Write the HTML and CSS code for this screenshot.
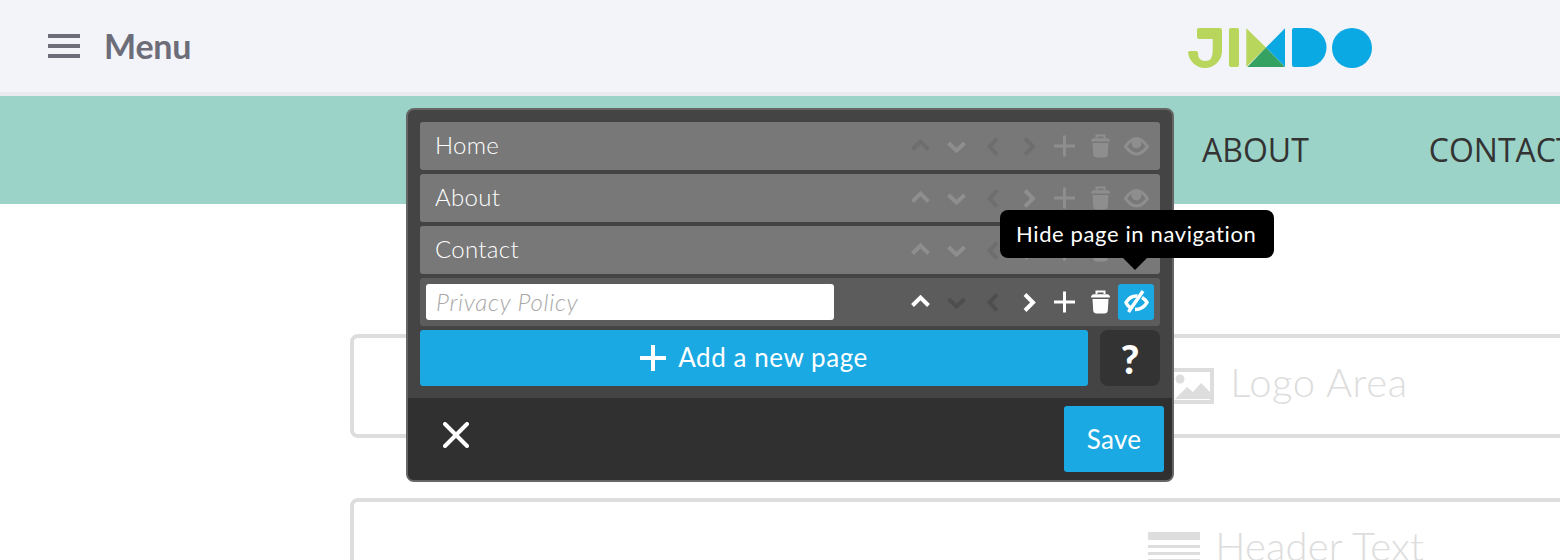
FILE: index.html
```html
<!DOCTYPE html>
<html lang="en">
<head>
<meta charset="utf-8">
<title>Jimdo navigation editor</title>
<link rel="stylesheet" href="styles.css">
</head>
<body>
<svg class="defs" width="0" height="0" aria-hidden="true">
  <symbol id="up" viewBox="0 0 36 36"><path d="M10.5 21.5l8-8 8 8" class="st"/></symbol>
  <symbol id="down" viewBox="0 0 36 36"><path d="M10.5 15l8 7.5 8-7.5" class="st"/></symbol>
  <symbol id="left" viewBox="0 0 36 36"><path d="M23 10.5l-7.5 8 7.5 8" class="st"/></symbol>
  <symbol id="right" viewBox="0 0 36 36"><path d="M15 10.5l8 8-8 8" class="st"/></symbol>
  <symbol id="plus" viewBox="0 0 36 36"><path d="M8 18h21M18.5 7.5v21" class="st thin"/></symbol>
  <symbol id="trash" viewBox="0 0 36 36"><path d="M14.5 10V7.5h8V10" class="hd"/><path d="M9 13.5q0-3 3-3.300h13q3 .3 3 3.300z" class="fl"/><path d="M10.500 15h16l-.7 11.500q-.3 3-3.300 3h-8q-3 0-3.300-3z" class="fl"/></symbol>
  <symbol id="eye" viewBox="0 0 36 36"><path d="M7.500 18.500Q13 10.500 18.500 10.500T29.500 18.500Q24 26 18.500 26T7.500 18.500z" class="hd wide"/><circle cx="18.500" cy="15.500" r="5" class="fl"/></symbol>
  <symbol id="eye-off" viewBox="0 0 36 36"><path d="M12.500 24Q9 21.500 8 18.500 12 11.500 19.500 12" class="st mid"/><path d="M24 13.500Q27.500 15.500 29 18.500 25 25.500 17 25.500" class="st mid"/><path d="M25 7L10.500 28" class="st mid"/></symbol>
</svg>

<div class="page">
  <header class="topbar">
    <div class="menu">
      <span class="burger"><i></i><i></i><i></i></span>
      <span class="menu-label">Menu</span>
    </div>
    <svg class="logo" viewBox="0 0 184 40" width="184" height="40" role="img" aria-label="Jimdo">
      <path class="lime" d="M9 2Q9 0 11 0H32Q34 0 34 2V23A17 17 0 0 1 0 23Q0 23 0 25 0 23 2 23H8Q10 23 10 25 10 33 17.300 33 24.700 33 24.700 23V11H11Q9 11 9 9Z"/>
      <rect class="lime" x="41" y="0" width="10" height="39" rx="2"/>
      <path class="lime" d="M58.300 0.300L78 19.500 58.300 38.700Z"/>
      <path class="green" d="M59.300 39L78 19.500 97 39Z"/>
      <path class="blue" d="M97 0.300L78 19.500 97 38.700Z"/>
      <path class="blue" d="M104 2Q104 0 106 0H119A19.500 19.500 0 0 1 119 39H106Q104 39 104 37Z"/>
      <circle class="blue" cx="164" cy="20" r="20"/>
    </svg>
    <span></span>
  </header>

  <nav class="sitenav">
    <a>HOME</a>
    <a>ABOUT</a>
    <a>CONTACT</a>
  </nav>

  <main class="slots">
    <section class="slot slot-logo">
      <svg class="ph-icon" viewBox="0 0 44 36" width="44" height="36"><path d="M2 2h40v32H2z" class="frame"/><circle cx="10" cy="11" r="4.500" class="solid"/><path d="M5 31l12-12 6 5 8-9 9 9v7z" class="solid"/></svg>
      <span class="ph-text">Logo Area</span>
    </section>
    <section class="slot slot-header">
      <span class="lines"><i class="thick"></i><i></i><i></i><i></i><i></i></span>
      <span class="ph-text">Header Text</span>
    </section>
  </main>

  <aside class="editor">
    <div class="editor-body">
      <div class="row">
        <span class="row-label">Home</span>
        <span class="tools">
          <svg class="ic off"><use href="#up"/></svg><svg class="ic dim"><use href="#down"/></svg><svg class="ic off"><use href="#left"/></svg><svg class="ic off"><use href="#right"/></svg><svg class="ic dim"><use href="#plus"/></svg><svg class="ic dim"><use href="#trash"/></svg><svg class="ic dim"><use href="#eye"/></svg>
        </span>
      </div>
      <div class="row">
        <span class="row-label">About</span>
        <span class="tools">
          <svg class="ic dim"><use href="#up"/></svg><svg class="ic dim"><use href="#down"/></svg><svg class="ic off"><use href="#left"/></svg><svg class="ic dim"><use href="#right"/></svg><svg class="ic dim"><use href="#plus"/></svg><svg class="ic dim"><use href="#trash"/></svg><svg class="ic dim"><use href="#eye"/></svg>
        </span>
      </div>
      <div class="row">
        <span class="row-label">Contact</span>
        <span class="tools">
          <svg class="ic dim"><use href="#up"/></svg><svg class="ic dim"><use href="#down"/></svg><svg class="ic off"><use href="#left"/></svg><svg class="ic dim"><use href="#right"/></svg><svg class="ic dim"><use href="#plus"/></svg><svg class="ic dim"><use href="#trash"/></svg><svg class="ic dim"><use href="#eye"/></svg>
        </span>
      </div>
      <div class="row row-active">
        <input class="row-input" type="text" placeholder="Privacy Policy">
        <span class="tools">
          <svg class="ic lit"><use href="#up"/></svg><svg class="ic off2"><use href="#down"/></svg><svg class="ic off2"><use href="#left"/></svg><svg class="ic lit"><use href="#right"/></svg><svg class="ic lit"><use href="#plus"/></svg><svg class="ic lit"><use href="#trash"/></svg><svg class="ic lit on"><use href="#eye-off"/></svg>
        </span>
      </div>
      <div class="add-row">
        <button class="add-btn" type="button">
          <svg class="add-plus" viewBox="0 0 26 26" width="26" height="26"><path d="M0 13h26M13 0v26"/></svg>
          <span class="add-label">Add a new page</span>
        </button>
        <button class="help-btn" type="button">?</button>
      </div>
    </div>
    <div class="editor-foot">
      <svg class="close" viewBox="0 0 26 26" width="26" height="26"><path d="M2 2l22 22M24 2L2 24"/></svg>
      <button class="save-btn" type="button">Save</button>
    </div>
    <div class="tooltip">Hide page in navigation</div>
  </aside>
</div>
</body>
</html>
```
FILE: styles.css
```css
html, body {
  margin: 0;
  padding: 0;
  height: 100%;
  overflow: hidden;
  background: #fff;
}
body {
  font-family: "Lato", "Liberation Sans", sans-serif;
}
.defs {
  position: absolute;
}
.page {
  position: relative;
  width: 2560px;
  height: 560px;
  overflow: hidden;
}

/* top bar */
.topbar {
  box-sizing: border-box;
  height: 96px;
  background: #f3f4f9;
  border-bottom: 4px solid #e9eaef;
  display: grid;
  grid-template-columns: 1fr auto 1fr;
  align-items: center;
}
.menu {
  display: flex;
  align-items: center;
  gap: 24px;
  padding-left: 48px;
}
.burger {
  display: flex;
  flex-direction: column;
  gap: 6px;
  width: 32px;
}
.burger i {
  display: block;
  height: 4px;
  background: #6c6d78;
}
.menu-label {
  font-size: 34px;
  font-weight: 700;
  letter-spacing: -0.2px;
  line-height: 40px;
  color: #6c6d78;
}
.logo {
  display: block;
  margin-top: 4px;
}
.lime { fill: #b9d65c; }
.green { fill: #36a262; }
.blue { fill: #0aa9e3; }

/* site navigation */
.sitenav {
  height: 108px;
  box-sizing: border-box;
  padding-bottom: 2px;
  background: #9cd3c8;
  display: flex;
  align-items: center;
  gap: 120px;
  padding-left: 987px;
}
.sitenav a {
  font-family: "Open Sans", sans-serif;
  font-size: 32px;
  color: #333;
}

/* placeholder slots */
.slots {
  width: 1860px;
  margin-left: 350px;
  padding-top: 130px;
  display: flex;
  flex-direction: column;
  gap: 60px;
}
.slot {
  box-sizing: border-box;
  border: 4px solid #ddd;
  border-radius: 8px;
  height: 104px;
  display: flex;
  align-items: center;
  justify-content: center;
  gap: 16px;
  color: #ddd;
}
.slot-logo {
  padding-left: 18px;
}
.slot-header {
  gap: 15px;
  padding-left: 12px;
}
.ph-text {
  font-size: 40px;
  font-weight: 300;
  letter-spacing: 0.6px;
  color: #ddd;
  line-height: 46px;
  margin-top: -9px;
}
.slot-header .ph-text {
  letter-spacing: 0.15px;
}
.ph-icon .frame {
  fill: none;
  stroke: #ddd;
  stroke-width: 4;
}
.ph-icon .solid {
  fill: #ddd;
}
.lines {
  display: flex;
  flex-direction: column;
  gap: 4px;
  width: 52px;
}
.lines i {
  display: block;
  height: 3px;
  background: #ddd;
}
.lines i.thick {
  height: 8px;
  margin-bottom: 1px;
  border-radius: 1px;
}

/* editor panel */
.editor {
  position: absolute;
  left: 406px;
  top: 108px;
  box-sizing: border-box;
  width: 768px;
  height: 374px;
  background: #444;
  border: 2px solid #666;
  border-radius: 8px;
  display: flex;
  flex-direction: column;
}
.editor-body {
  flex: 1;
  padding: 12px;
  display: flex;
  flex-direction: column;
  gap: 4px;
}
.row {
  box-sizing: border-box;
  height: 48px;
  border-radius: 3px;
  background: #787878;
  display: flex;
  align-items: center;
  padding: 0 6px 0 15px;
}
.row-label {
  flex: 1;
  font-size: 24px;
  font-weight: 300;
  letter-spacing: 0.3px;
  line-height: 30px;
  padding-bottom: 2px;
  color: #fff;
}
.row-active {
  background: #5c5c5c;
  padding-left: 6px;
}
.row-input {
  box-sizing: border-box;
  width: 408px;
  height: 36px;
  border: 0;
  border-radius: 3px;
  background: #fff;
  padding: 0 10px 2px;
  margin-right: auto;
  font-family: inherit;
  font-size: 24px;
  font-weight: 300;
  font-style: italic;
  letter-spacing: 0.7px;
  outline: none;
}
.row-input::placeholder {
  color: #a8a8a8;
  opacity: 1;
}
.tools {
  display: flex;
}
.ic {
  display: block;
  width: 36px;
  height: 36px;
}
.ic.off { color: #6e6e6e; }
.ic.dim { color: #8e8e8e; }
.ic.off2 { color: #4e4e4e; }
.ic.lit { color: #fff; }
.ic.on {
  background: #1aa9e2;
  border-radius: 3px;
}
.st {
  fill: none;
  stroke: currentColor;
  stroke-width: 4;
}
.st.thin { stroke-width: 3; }
.st.mid { stroke-width: 3.5; }
.hd {
  fill: none;
  stroke: currentColor;
  stroke-width: 2;
}
.hd.wide { stroke-width: 3; }
.fl {
  fill: currentColor;
}
.add-row {
  display: flex;
  justify-content: space-between;
}
.add-btn {
  width: 668px;
  height: 56px;
  border: 0;
  border-radius: 3px;
  background: #1aa9e2;
  color: #fff;
  font-family: inherit;
  font-size: 26px;
  letter-spacing: 0.55px;
  display: flex;
  align-items: center;
  justify-content: center;
  gap: 12px;
  padding: 0;
}
.add-label {
  line-height: 30px;
  padding-bottom: 2px;
}
.add-plus {
  fill: none;
  stroke: #fff;
  stroke-width: 4;
}
.help-btn {
  width: 60px;
  height: 56px;
  border: 0;
  border-radius: 8px;
  background: #333;
  color: #fff;
  font-family: inherit;
  font-size: 40px;
  font-weight: 900;
  padding: 1px 0 0;
}
.editor-foot {
  height: 82px;
  flex: none;
  box-sizing: border-box;
  background: #303030;
  border-radius: 0 0 6px 6px;
  display: flex;
  align-items: flex-start;
  justify-content: space-between;
  padding: 8px 8px 8px 35px;
}
.close {
  margin-top: 16px;
  fill: none;
  stroke: #fff;
  stroke-width: 4;
  stroke-linecap: round;
}
.save-btn {
  width: 100px;
  height: 66px;
  border: 0;
  border-radius: 3px;
  background: #1aa9e2;
  color: #fff;
  font-family: inherit;
  font-size: 26px;
  letter-spacing: 0.3px;
  padding: 0;
}

/* tooltip over the panel */
.tooltip {
  position: absolute;
  left: 592px;
  top: 100px;
  box-sizing: border-box;
  width: 274px;
  height: 48px;
  background: #000;
  border-radius: 8px;
  color: #fff;
  font-size: 22px;
  letter-spacing: 0.62px;
  line-height: 48px;
  padding-left: 16px;
  white-space: nowrap;
}
.tooltip::after {
  content: "";
  position: absolute;
  left: 123px;
  top: 48px;
  border: 12px solid transparent;
  border-top-color: #000;
  border-bottom: 0;
}
```
